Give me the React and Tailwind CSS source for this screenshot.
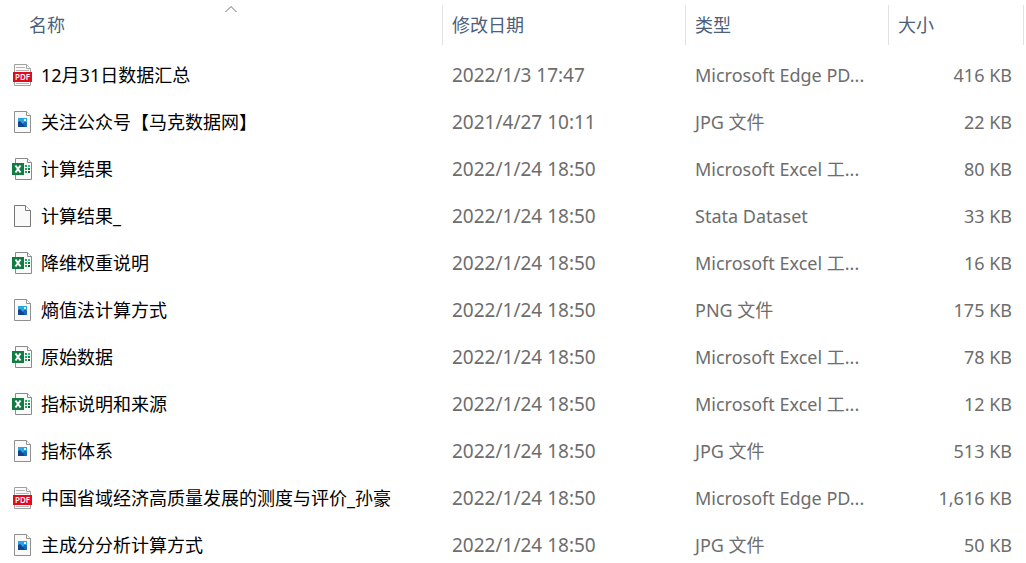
import React, { useState } from 'react';

const files = [
    { kind: 'pdf', name: '12月31日数据汇总', date: '2022/1/3 17:47', type: 'Microsoft Edge PD...', size: '416 KB' },
    { kind: 'image', name: '关注公众号【马克数据网】', date: '2021/4/27 10:11', type: 'JPG 文件', size: '22 KB' },
    { kind: 'excel', name: '计算结果', date: '2022/1/24 18:50', type: 'Microsoft Excel 工...', size: '80 KB' },
    { kind: 'blank', name: '计算结果_', date: '2022/1/24 18:50', type: 'Stata Dataset', size: '33 KB' },
    { kind: 'excel', name: '降维权重说明', date: '2022/1/24 18:50', type: 'Microsoft Excel 工...', size: '16 KB' },
    { kind: 'image', name: '熵值法计算方式', date: '2022/1/24 18:50', type: 'PNG 文件', size: '175 KB' },
    { kind: 'excel', name: '原始数据', date: '2022/1/24 18:50', type: 'Microsoft Excel 工...', size: '78 KB' },
    { kind: 'excel', name: '指标说明和来源', date: '2022/1/24 18:50', type: 'Microsoft Excel 工...', size: '12 KB' },
    { kind: 'image', name: '指标体系', date: '2022/1/24 18:50', type: 'JPG 文件', size: '513 KB' },
    { kind: 'pdf', name: '中国省域经济高质量发展的测度与评价_孙豪', date: '2022/1/24 18:50', type: 'Microsoft Edge PD...', size: '1,616 KB' },
    { kind: 'image', name: '主成分分析计算方式', date: '2022/1/24 18:50', type: 'JPG 文件', size: '50 KB' },
];

const columns = [
    { key: 'name', label: '名称' },
    { key: 'date', label: '修改日期' },
    { key: 'type', label: '类型' },
    { key: 'size', label: '大小' },
];

// Sheet of paper with a folded corner
function Page({ stroke = '#8a8a8a' }) {
    return (
        <>
            <path d="M2.5 .5h11l5 5v16h-16z" fill="#fafafa" stroke={stroke} />
            <path d="M13.5 .5v5h5" fill="#fff" stroke={stroke} />
        </>
    );
}

function FileIcon({ kind }) {
    return (
        <svg className="shrink-0" width="21" height="22" viewBox="0 0 21 22" aria-hidden="true">
            {kind === 'blank' && <Page stroke="#777" />}

            {kind === 'image' && (
                <>
                    <path d="M2.5 .5h12l4 4v17h-16z" fill="#fafafa" stroke="#8f8f8f" />
                    <path d="M14.5 .5v4h4" fill="#fff" stroke="#8f8f8f" />
                    <path d="M6 7h9v9H6z" fill="#2ba3e6" />
                    <path d="M6 11l2-1 3 3 2-2 2 1v4H6z" fill="#12458c" />
                    <path d="M11 13l2-2 2 1v4h-2z" fill="#1769ba" />
                    <path d="M12 8h2v2h-2z" fill="#e6f7ff" />
                </>
            )}

            {kind === 'pdf' && (
                <>
                    <path d="M2.5 .5h12l4 4v17h-16z" fill="#fafafa" stroke="#a0a0a0" />
                    <path d="M14.5 .5v4h4" fill="#fff" stroke="#a0a0a0" />
                    <path d="M4 3.5h9M4 6.5h13M4 19.5h13" stroke="#b5b5b5" />
                    <path d="M1 8h19v10H1z" fill="#df0d1c" />
                    <text x="10.5" y="16" textAnchor="middle" fontSize="8" fontWeight="600" fill="#fff" fontFamily="Open Sans, sans-serif">PDF</text>
                </>
            )}

            {kind === 'excel' && (
                <>
                    <path d="M3.5 .5h12l4 4v17h-16z" fill="#fafafa" stroke="#8a8a8a" />
                    <path d="M15.5 .5v4h4" fill="#fff" stroke="#8a8a8a" />
                    <path d="M13 7h2v2h-2zM13 10h2v2h-2zM13 13h2v2h-2z" fill="#21a366" />
                    <path d="M16 7h2v2h-2z" fill="#33c481" />
                    <path d="M16 10h2v2h-2z" fill="#107c41" />
                    <path d="M16 13h2v2h-2z" fill="#185c37" />
                    <path d="M0 5h12v12H0z" fill="#107c41" />
                    <path d="M3.5 7.5l5 7M8.5 7.5l-5 7" stroke="#fff" strokeWidth="2" />
                </>
            )}
        </svg>
    );
}

export default function App() {
    const [ascending, setAscending] = useState(true);
    const rows = ascending ? files : [...files].reverse();

    return (
        <main
            lang="zh-CN"
            className="h-screen overflow-hidden bg-white pr-0.5 font-['Noto_Sans','Noto_Sans_CJK_SC',sans-serif] text-lg/6 text-[#6d6d6d]"
        >
            <table className="w-full table-fixed border-collapse text-left whitespace-nowrap">
                <colgroup>
                    <col />
                    <col className="w-[243px]" />
                    <col className="w-[203px]" />
                    <col className="w-[135px]" />
                </colgroup>
                <thead>
                    <tr>
                        {columns.map((column) => (
                            <th key={column.key} scope="col" className="h-[51px] p-0 pt-[5px] align-top font-normal text-[#4c607a]">
                                <div className={`h-10 border-r border-[#e2e2e2] ${column.key === 'name' ? 'pl-5' : ''}`}>
                                    <button
                                        onClick={() => setAscending(!ascending)}
                                        className="relative h-full w-full pl-[9px] text-left"
                                    >
                                        {column.label}
                                        {column.key === 'name' && (
                                            <svg
                                                className={`absolute top-0 left-1/2 -translate-x-1/2 ${ascending ? '' : 'rotate-180'}`}
                                                width="12"
                                                height="8"
                                                viewBox="0 0 12 8"
                                                aria-hidden="true"
                                            >
                                                <path d="M.5 7L6 1.5 11.5 7" fill="none" stroke="#6d6d6d" />
                                            </svg>
                                        )}
                                    </button>
                                </div>
                            </th>
                        ))}
                    </tr>
                </thead>
                <tbody>
                    {rows.map((file) => (
                        <tr key={file.name} className="h-[47px] hover:bg-[#e5f3ff]">
                            <td className="p-0 pl-3 text-black">
                                <div className="flex items-center gap-2">
                                    <FileIcon kind={file.kind} />
                                    <span>{file.name}</span>
                                </div>
                            </td>
                            <td className="p-0 pl-[9px] text-[19px]">{file.date}</td>
                            <td className="p-0 pl-[9px]">{file.type}</td>
                            <td className="p-0 pr-3 text-right">{file.size}</td>
                        </tr>
                    ))}
                </tbody>
            </table>
        </main>
    );
}
